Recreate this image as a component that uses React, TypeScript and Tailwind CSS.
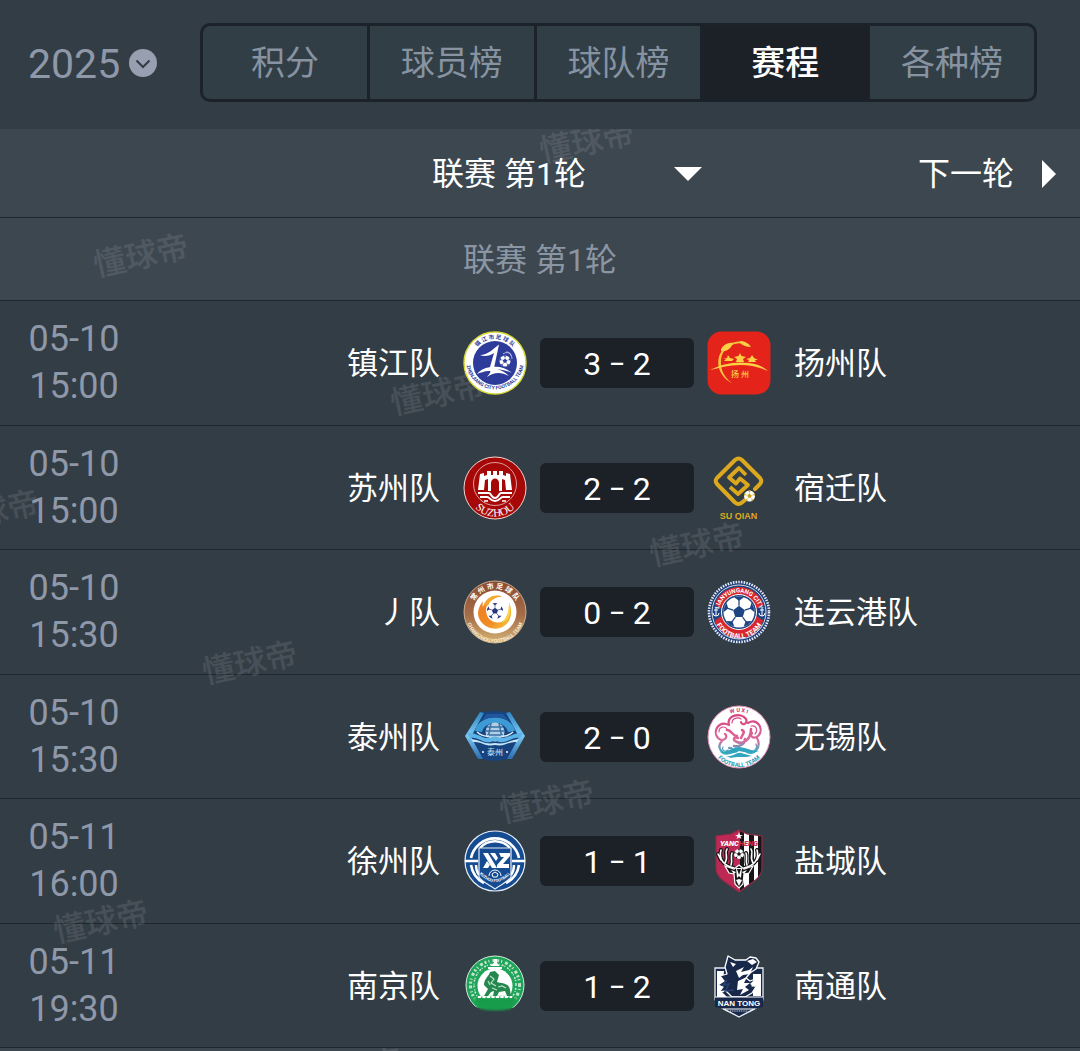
import { useId, useState } from "react";
import type { ReactNode } from "react";

const FONT = "font-['Roboto','Noto_Sans_CJK_SC',sans-serif]";

function Badge({ label, children }: { label: string; children: ReactNode }) {
  return (
    <svg viewBox="0 0 64 64" role="img" aria-label={label} className="relative z-10 size-16 shrink-0">
      {children}
    </svg>
  );
}

function ArcText({ d, size, fill, children, weight = 700, family = "Roboto, 'Noto Sans CJK SC', sans-serif" }: {
  d: string; size: number; fill: string; children: string; weight?: number; family?: string;
}) {
  const id = useId();
  return (
    <>
      <path id={id} d={d} fill="none" />
      <text fontSize={size} fill={fill} fontWeight={weight} fontFamily={family} textAnchor="middle">
        <textPath href={"#" + id} startOffset="50%">{children}</textPath>
      </text>
    </>
  );
}

function Football({ x, y, r, patch }: { x: number; y: number; r: number; patch: string }) {
  const angles = [0, 72, 144, 216, 288];
  return (
    <g transform={`translate(${x} ${y}) scale(${r / 10})`}>
      <circle r="10" fill="#fff" />
      <path d="M0-4 3.8-1.2 2.4 3.2H-2.4L-3.8-1.2Z" fill={patch} />
      {angles.map((a) => (
        <g key={a} transform={`rotate(${a})`}>
          <path d="M-3.2-9.5 0-7.3 3.2-9.5A10 10 0 0 0-3.2-9.5Z" fill={patch} />
          <path d="M0-4V-8" stroke={patch} strokeWidth="0.8" />
        </g>
      ))}
    </g>
  );
}

function Zhenjiang() {
  return (
    <Badge label="镇江队">
      <circle cx="32" cy="32" r="31" fill="#fff" stroke="#d6d935" strokeWidth="1.4" />
      <circle cx="32" cy="32" r="22" fill="#2d3c9b" />
      <ArcText d="M8 32A24 24 0 0 1 56 32" size={5.5} fill="#2d3c9b">镇 江 市 足 球 队</ArcText>
      <ArcText d="M3.5 24A29 29 0 1 0 60.5 24" size={5} fill="#2d3c9b">ZHENJIANG CITY FOOTBALL TEAM</ArcText>
      <path d="M17 24C25 24 30 18 36 13.500L31 37C35 38 41 40 46 45 38 41 31 41 24 46 27 42 29 40 26 40 21 40 17 42 14 43 18 38 23 37 27 36L31 22C27 25 21 26 17 24Z" fill="#fff" />
      <path d="M30 36C37 35 44 38 49 42 43 39 36 38 30 38Z" fill="#fff" />
      <Football x={42} y={30} r={5.5} patch="#2d3c9b" />
      <path d="M40 23C44 20 49 22 49 28M43 21C47 21 48 23 48 25" fill="none" stroke="#c8cfee" strokeWidth="0.8" />
    </Badge>
  );
}

function Yangzhou() {
  return (
    <Badge label="扬州队">
      <rect x="0.500" y="0.500" width="63" height="63" rx="14" fill="#e4231a" />
      <path d="M44 15C34 6 19 11 13 23 8 34 14 47 25 52 15 45 12 34 15 24 20 13 33 9 44 15Z" fill="#f8c23c" />
      <path d="M14 18C17 13 22 11 26 12 24 18 19 21 14 20ZM33 10C38 10 42 13 44 16 39 16 35 14 33 12Z" fill="#fbd044" />
      <path d="M3 39C14 33 29 30 42 32 51 33 57 36 61 40 52 36 43 34 34 34 22 34 12 37 3 39Z" fill="#fbd044" />
      <path d="M33 22 34.500 25 39 26 36 28 37 31H29L30 28 27 26 31.500 25ZM21 24 23 27 27 28 25 30H17L19 28 16 28 20 27ZM45 24 47 27 51 29H48L49 31H41L42 29 39 28 43 27Z" fill="#fbd044" />
      <text x="33" y="46" textAnchor="middle" fontSize="8" fontWeight="500" fill="#fbd044" fontFamily="'Noto Sans CJK SC', sans-serif">扬 州</text>
    </Badge>
  );
}

function Suzhou() {
  return (
    <Badge label="苏州队">
      <circle cx="32" cy="32" r="31" fill="#a60808" stroke="#f1d5d0" strokeWidth="1" />
      <circle cx="32" cy="28" r="21.500" fill="none" stroke="#edc3bd" strokeWidth="0.8" />
      <path d="M15 34 17 18 21 17V20L24 19V15H28V19H30V15H34V19H36V15H40V19L43 20V17L47 18 49 34H43L42 24 39 23V35H36V27C36 21 28 21 28 27V35H25V23L22 24 21 34Z" fill="#fff" />
      <path d="M15 37H26C28 37 28 42 32 42S36 37 38 37H49M17 41H24C27 41 27 45 32 45S37 41 40 41H47" fill="none" stroke="#fff" strokeWidth="2" />
      <path d="M21 45H25M39 45H43" stroke="#fff" strokeWidth="1.5" />
      <ArcText d="M8 46A27 27 0 0 0 56 46" size={11} weight={400} fill="#fff" family="'Liberation Serif', serif">SUZHOU</ArcText>
    </Badge>
  );
}

function Suqian() {
  return (
    <Badge label="宿迁队">
      <path d="M38 44 35 46.500Q31.500 49.500 28 46.500L10 28Q7.500 25 10 22L28 4Q31.500 1 35 4L53 22Q55.500 25 53 28L48 33" fill="none" stroke="#dca91e" strokeWidth="4" strokeLinecap="round" strokeLinejoin="round" />
      <path d="M39 19 32 12 22 21.500 29 27.500 33 22.500 41 29 31 38 23 31" fill="none" stroke="#dca91e" strokeWidth="3.800" strokeLinejoin="round" />
      <Football x={42.5} y={40} r={5.5} patch="#caa11c" />
      <text x="31.500" y="63" textAnchor="middle" fontSize="9" fontWeight="700" fill="#dca91e" fontFamily="'Liberation Sans', sans-serif">SU QIAN</text>
    </Badge>
  );
}

function Changzhou() {
  return (
    <Badge label="常州队">
      <defs>
        <linearGradient id="cz-ring" x2="0" y2="1">
          <stop stopColor="#8b4b31" /><stop offset="0.55" stopColor="#a66c47" /><stop offset="1" stopColor="#d3b274" />
        </linearGradient>
        <linearGradient id="cz-fire" x2="1" y2="1">
          <stop stopColor="#ef7c22" /><stop offset="0.6" stopColor="#f08c25" /><stop offset="1" stopColor="#f6cf45" />
        </linearGradient>
      </defs>
      <circle cx="32" cy="32" r="31" fill="url(#cz-ring)" stroke="#dcc3a5" strokeWidth="0.8" />
      <circle cx="32" cy="32" r="21.500" fill="#fff" />
      <ArcText d="M8.500 32A23.500 23.500 0 0 1 55.500 32" size={7} fill="#fff">常 州 市 足 球 队</ArcText>
      <ArcText d="M2.500 33A29.500 29.500 0 0 0 61.500 33" size={5} fill="#fbeed8">CHANGZHOU FOOTBALL TEAM</ArcText>
      <path d="M40 17C31 16 23 21 23 31 24 41 33 45 40 41 46 38 48 31 46 23 51 33 47 45 37 48 26 51 15 43 15 33 15 29 17 25 20 21 19 25 20 27 20 27 22 19 31 13 40 17Z" fill="url(#cz-fire)" />
      <path d="M21 25C24 17 31 14 38 16 32 18 27 20 25 26Z" fill="#f5a82c" />
      <path d="M46 23C50 32 46 41 38 43 43 39 46 32 46 23Z" fill="#f8d44c" />
      <Football x={32} y={31} r={8} patch="#29367d" />
    </Badge>
  );
}

function Lianyungang() {
  return (
    <Badge label="连云港队">
      <circle cx="32" cy="32" r="31" fill="#233f77" />
      <circle cx="32" cy="32" r="30" fill="none" stroke="#e9edf5" strokeWidth="2.600" strokeDasharray="1.500 1.200" />
      <circle cx="32" cy="32" r="27" fill="#1d4583" stroke="#fff" strokeWidth="0.8" />
      <path d="M9 24A24.500 24.500 0 0 1 55 24L49 28A18 18 0 0 0 15 28ZM9 41A24.500 24.500 0 0 0 55 41L49 37A18 18 0 0 1 15 37Z" fill="#d9272e" stroke="#d9272e" strokeWidth="2" />
      <circle cx="32" cy="32" r="17.500" fill="#1d4583" stroke="#fff" strokeWidth="1" />
      <Football x={32} y={32} r={15.5} patch="#1d4583" />
      <ArcText d="M11.500 33A20.500 20.500 0 0 1 52.500 33" size={6} fill="#fff">LIANYUNGANG CITY</ArcText>
      <ArcText d="M6.500 33A25.500 25.500 0 0 0 57.500 33" size={7} fill="#fff">FOOTBALL TEAM</ArcText>
      <path d="M9 28V36M7 30H11M6 33Q6 36 9 36T12 33M55 28V36M53 30H57M52 33Q52 36 55 36T58 33" fill="none" stroke="#fff" strokeWidth="1" />
    </Badge>
  );
}

function Taizhou() {
  return (
    <Badge label="泰州队">
      <defs>
        <linearGradient id="tz-sky" x2="0" y2="1">
          <stop stopColor="#2e86c5" /><stop offset="0.5" stopColor="#7cc8f1" /><stop offset="1" stopColor="#2b6cb4" />
        </linearGradient>
      </defs>
      <path d="M17 8Q32 4 47 8L62 31 49 52Q32 60 15 52L2 31Z" fill="#17437e" />
      <path d="M17 7 2 31 15 54H20L8 32 17 15 21 8ZM47 7 62 31 49 54H44L56 32 47 15 43 8Z" fill="url(#tz-sky)" />
      <path d="M12 26C15 8 49 8 52 26L45 27C42 15 22 15 19 27Z" fill="#3d9ad5" />
      <path d="M18 16 24 9H40L46 16C38 11 26 11 18 16Z" fill="#2257a0" />
      <circle cx="32" cy="27" r="9.500" fill="#b4cfe4" />
      <path d="M24 22H40M22 26H42M24 30H40M28 18 25 33M36 18 39 33" stroke="#3771a5" strokeWidth="1.500" />
      <path d="M4 28C14 27 19 34 27 33Q32 30 37 33C45 34 50 27 60 28L57 33C49 31 44 39 36 37Q32 34 28 37C20 39 15 31 7 33Z" fill="#5cb3e6" />
      <path d="M8 34C18 35 21 40 32 38 43 40 46 35 56 34L54 37C46 36 42 42 32 40 22 42 18 36 10 37Z" fill="#c3e6f8" />
      <path d="M14 27Q20 32 26 31M50 27Q44 32 38 31" fill="none" stroke="#dff2fc" strokeWidth="1.500" />
      <text x="32" y="50" textAnchor="middle" fontSize="8" fontWeight="500" fill="#b9dcf0" fontFamily="'Noto Sans CJK SC', sans-serif">泰州</text>
      <circle cx="20" cy="47" r="1" fill="#fff" /><circle cx="44" cy="47" r="1" fill="#fff" />
    </Badge>
  );
}

function Wuxi() {
  return (
    <Badge label="无锡队">
      <defs>
        <linearGradient id="wx-cloud" gradientUnits="userSpaceOnUse" x1="0" y1="8" x2="0" y2="54">
          <stop stopColor="#d7407c" /><stop offset="0.6" stopColor="#dd6a9c" /><stop offset="0.8" stopColor="#48abc2" /><stop offset="1" stopColor="#2ba6bd" />
        </linearGradient>
      </defs>
      <circle cx="32" cy="32" r="31" fill="#fff" stroke="#e292b4" strokeWidth="1" />
      <ArcText d="M7 32A25 25 0 0 1 57 32" size={5.5} fill="#cb3775">W U X I</ArcText>
      <ArcText d="M3 33A29 29 0 0 0 61 33" size={6} fill="#2b9bb5">FOOTBALL TEAM</ArcText>
      <g fill="none" stroke="url(#wx-cloud)" strokeLinecap="round">
        <path d="M22 20C19 10 34 7 39 14 41 19 35 21 34 17M41 18C50 13 57 23 52 30 48 35 42 32 45 28M50 33C55 42 47 51 40 47M15 36C9 42 15 51 23 48 27 46 25 42 22 43M22 20C12 15 5 26 11 33 16 38 22 32 18 29" strokeWidth="2.200" />
        <path d="M25 18C25 13 31 12 34 14M44 21C50 20 51 26 48 29M12 27C12 21 18 21 20 24M16 42C14 46 19 47 21 45M49 39C51 43 47 47 44 46" strokeWidth="1.200" />
        <path d="M20 25C25 25 25 31 30 31M44 24C44 34 37 40 30 37 25 35 27 31 31 33M35 25C39 27 35 30 34 33M38 34C38 39 33 42 27 41" strokeWidth="2.600" />
      </g>
      <path d="M13 47C22 47 26 42 32 42S43 46 52 46C43 49 37 47 32 46 28 49 20 50 13 47ZM19 51C27 52 29 47 34 48L45 51C37 53 29 51 24 53Z" fill="#32a5be" />
    </Badge>
  );
}

function Xuzhou() {
  return (
    <Badge label="徐州队">
      <circle cx="32" cy="32" r="30" fill="#154b91" stroke="#e5eef8" strokeWidth="1.200" />
      <g fill="none" stroke="#fff">
        <path d="M8 29A24.500 24.500 0 0 1 56 29M8 36A24.500 24.500 0 0 0 21 54M56 36A24.500 24.500 0 0 1 43 54" strokeWidth="2.600" />
        <path d="M17 19A20 20 0 0 1 47 19M13 36Q13 42 16 46M51 36Q51 42 48 46" strokeWidth="2.400" />
        <path d="M2 32H15M49 32H62" strokeWidth="2.400" />
      </g>
      <path d="M16 19H48V48C44 54 38 55 32 60 26 55 20 54 16 48Z" fill="#154b91" stroke="#e5eef8" strokeWidth="1.200" />
      <path d="M20 24H25L34 39H29ZM27 24H32L35 29 33 32ZM24 32 27 36 25 39H20ZM36 24H47V27L40 35H46V39H34V36L41 28H38Z" fill="#fff" />
      <path d="M26 47A6 6 0 0 1 38 47M29 45 32 43 35 45 34 48H30Z" fill="none" stroke="#fff" strokeWidth="1" />
      <ArcText d="M14 42Q32 64 50 42" size={4} fill="#fff">XUZHOU FOOTBALL</ArcText>
    </Badge>
  );
}

function Yancheng() {
  return (
    <Badge label="盐城队">
      <clipPath id="yc-shield"><path d="M32 1 40 5 55 7V39C55 50 43 54 32 63 21 54 9 50 9 39V7L24 5Z" /></clipPath>
      <g clipPath="url(#yc-shield)">
        <rect width="33" height="64" fill="#bd2854" />
        <rect x="33" width="31" height="64" fill="#171517" />
        <path d="M37 0H42V64H37ZM47 0H51V64H47Z" fill="#fff" />
      </g>
      <path d="M32 1 40 5 55 7V39C55 50 43 54 32 63 21 54 9 50 9 39V7L24 5Z" fill="none" stroke="#932947" strokeWidth="1.200" />
      <path d="M32 3 33 6H36L33.500 7.500 34.500 10 32 8.500 29.500 10 30.500 7.500 28 6H31Z" fill="#fff" />
      <text x="32" y="17" textAnchor="middle" fontSize="7.500" fontWeight="900" fontStyle="italic" fontFamily="Roboto, sans-serif"><tspan fill="#fff">YANC</tspan><tspan fill="#c62b55">HENG</tspan></text>
      <Football x={32} y={25} r={5} patch="#171517" />
      {["#171517", "#fff"].map((color, i) => (
        <path key={color} d="M27 39C18 37 11 31 14 21M18 34C22 28 17 24 20 20M24 36C26 31 23 28 25 24M14 31 11 25M37 39C46 37 53 31 50 21M46 34C42 28 47 24 44 20M40 36C38 31 41 28 39 24M50 31 53 25" fill="none" stroke={color} strokeWidth={i ? 1.6 : 4} strokeLinecap="round" />
      ))}
      <path d="M18 37 27 40 32 36 37 40 46 37 42 44 37 45 36 55 32 59 28 55 27 45 22 44Z" fill="#171517" stroke="#fff" strokeWidth="1.200" />
      <path d="M29 39H35L34 49 32 47 30 49ZM24 41 29 43 27 45ZM40 41 35 43 37 45ZM29 51 32 50 35 51 32 57Z" fill="#fff" />
      <path d="M30 40H34L32 46Z" fill="#171517" />
    </Badge>
  );
}

function Nanjing() {
  return (
    <Badge label="南京队">
      <defs>
        <clipPath id="nj-top"><path d="M0 0H64V45C58 49 55 53 49 54H17C10 53 8 49 4 46H0Z" /></clipPath>
        <filter id="nj-soft"><feGaussianBlur stdDeviation="0.8" /></filter>
      </defs>
      <g clipPath="url(#nj-top)">
        <circle cx="32" cy="31" r="29" fill="#20a45a" stroke="#d0ecdb" strokeWidth="1" />
        <circle cx="32" cy="31" r="24.500" fill="none" stroke="#bfe5cd" strokeWidth="3" strokeDasharray="2 2 1 3 3 2" />
        <circle cx="32" cy="31" r="21" fill="none" stroke="#c8ead5" strokeWidth="1.500" strokeDasharray="1 2 2 1" />
        <circle cx="32" cy="32" r="17.500" fill="#fff" />
      </g>
      <path d="M31 5H34V9L37 12H27L31 9ZM25 13H39V15H25Z" fill="#fff" />
      <path d="M21 42 25 35 21 31C21 25 26 22 27 18L32 17 36 21 34 28C41 30 46 29 47 36L48 42H44L42 37 36 38 34 42H30L31 37 28 38 25 42Z" fill="#24884e" />
      <path d="M27 22 31 25 28 29 33 32M35 33 39 32 43 34M25 27 27 31M29 34 34 36" fill="none" stroke="#b9e1c6" strokeWidth="1.200" />
      <path d="M9 44Q32 41 55 44L48 55Q32 58 17 55Z" fill="#169c4b" filter="url(#nj-soft)" />
      <path d="M15 43H49" stroke="#fff" strokeWidth="2" strokeDasharray="3 1.500" />
      <path d="M49 56V63" stroke="#69a27d" strokeWidth="1.500" filter="url(#nj-soft)" />
    </Badge>
  );
}

function Nantong() {
  return (
    <Badge label="南通队">
      <path d="M8 14H56V44C56 53 44 56 32 63 20 56 8 53 8 44Z" fill="#17284b" stroke="#e9eef4" strokeWidth="1.300" />
      <path d="M10 17H17L15 38 23 46H10ZM46 20H54V42H46Z" fill="#fff" />
      <path d="M21 2 28 6 39 6 43 3 49 4 52 8 49 15 43 19 39 24 43 27 48 25 45 32 50 31 45 39 38 43 25 43 19 37 12 38 16 33 11 31 17 27 13 22 20 20 18 13Z" fill="#17284b" stroke="#fff" strokeWidth="1.300" strokeLinejoin="round" />
      <path d="M23 8 29 10 26 13ZM40 7 46 5 50 8 45 11ZM29 17 37 13 34 18 42 16 46 13 43 20 36 21 32 24ZM31 27 40 23 37 29 43 29 38 33 42 36 33 41 36 35 30 36ZM43 30 49 24 53 25 48 33Z" fill="#fff" />
      <path d="M20 26 16 31 22 30 18 37 27 36" fill="none" stroke="#294070" strokeWidth="1.500" />
      <path d="M8 43H56V53L46 55H18L8 53Z" fill="#17284b" />
      <path d="M8 43H56M16 55H48" stroke="#fff" strokeWidth="1" />
      <text x="32" y="51.500" textAnchor="middle" fontSize="8" fontWeight="800" fill="#fff" fontFamily="'Liberation Sans', sans-serif">NAN TONG</text>
      <path d="M23 57H41" stroke="#dfe5ee" strokeWidth="1.200" strokeDasharray="1 0.800" />
    </Badge>
  );
}

type Match = { date: string; time: string; home: string; away: string; score: [number, number]; homeBadge: ReactNode; awayBadge: ReactNode };

const MATCHES: Match[] = [
  { date: "05-10", time: "15:00", home: "镇江队", away: "扬州队", score: [3, 2], homeBadge: <Zhenjiang />, awayBadge: <Yangzhou /> },
  { date: "05-10", time: "15:00", home: "苏州队", away: "宿迁队", score: [2, 2], homeBadge: <Suzhou />, awayBadge: <Suqian /> },
  { date: "05-10", time: "15:30", home: "丿队", away: "连云港队", score: [0, 2], homeBadge: <Changzhou />, awayBadge: <Lianyungang /> },
  { date: "05-10", time: "15:30", home: "泰州队", away: "无锡队", score: [2, 0], homeBadge: <Taizhou />, awayBadge: <Wuxi /> },
  { date: "05-11", time: "16:00", home: "徐州队", away: "盐城队", score: [1, 1], homeBadge: <Xuzhou />, awayBadge: <Yancheng /> },
  { date: "05-11", time: "19:30", home: "南京队", away: "南通队", score: [1, 2], homeBadge: <Nanjing />, awayBadge: <Nantong /> },
];

const TABS = ["积分", "球员榜", "球队榜", "赛程", "各种榜"];

const WATERMARKS = [
  "left-[93px] top-[111px]",
  "left-[539px] top-[-3px]",
  "left-[390px] top-[249px]",
  "left-[-56px] top-[367px]",
  "left-[649px] top-[400px]",
  "left-[202px] top-[518px]",
  "left-[499px] top-[657px]",
  "left-[53px] top-[777px]",
  "left-[308px] top-[925px]",
];

function MatchRow({ match }: { match: Match }) {
  return (
    <li className="flex h-[125px] items-center border-b border-[#1e272f] bg-[#333d45] even:h-[124px]">
      <div className="relative z-10 w-[154px] shrink-0 pl-7 text-4xl leading-[47px] text-[#8f98a8]">
        <time className="block w-[92px] text-center">
          {match.date}
          <br />
          {match.time}
        </time>
      </div>
      <div className="flex min-w-0 flex-1 items-center justify-end gap-[23px] pr-[13px]">
        <span className="relative z-10 pt-0.5 text-[31px] leading-10 whitespace-nowrap text-white">{match.home}</span>
        {match.homeBadge}
      </div>
      <div className="relative z-10 flex h-[50px] w-[154px] shrink-0 items-center justify-center gap-2 rounded-md bg-[#1c2027] pt-0.5 text-[32px] text-white">
        <span>{match.score[0]}</span>
        <span className="text-2xl font-medium">–</span>
        <span>{match.score[1]}</span>
      </div>
      <div className="flex min-w-0 flex-1 items-center gap-[23px] pl-[13px]">
        {match.awayBadge}
        <span className="relative z-10 pt-0.5 text-[31px] leading-10 whitespace-nowrap text-white">{match.away}</span>
      </div>
    </li>
  );
}

export default function App() {
  const [tab, setTab] = useState("赛程");
  return (
    <div className={`${FONT} flex min-h-screen flex-col bg-[#3d4750]`}>
      <header className="flex items-center bg-[#333d45] pt-[23px] pr-[43px] pb-[27px] pl-7">
        <div className="relative mr-[43px] w-[129px] shrink-0">
          <select aria-label="赛季" className="block w-full appearance-none bg-transparent p-0 pt-0.5 text-[41px] leading-[50px] text-[#8f98a8]">
            <option>2025</option>
          </select>
          <svg viewBox="0 0 28 28" className="pointer-events-none absolute top-3 right-0 size-7">
            <circle cx="14" cy="14" r="14" fill="#989fb1" />
            <path d="m7.500 11.500 6.500 6.500 6.500-6.500" fill="none" stroke="#333c45" strokeWidth="2" />
          </svg>
        </div>
        <nav className="flex h-[79px] min-w-0 flex-1 divide-x-3 divide-[#1c222a] overflow-hidden rounded-[10px] border-3 border-[#1c222a] bg-[#323e46]">
          {TABS.map((name) => (
            <button
              key={name}
              type="button"
              aria-pressed={name === tab}
              onClick={() => setTab(name)}
              className={name === tab ? "flex-1 bg-[#1c2027] pt-0.5 text-[34px] font-medium whitespace-nowrap text-white" : "flex-1 pt-0.5 text-[34px] whitespace-nowrap text-[#8793a1]"}
            >
              {name}
            </button>
          ))}
        </nav>
      </header>

      <main className="relative flex-1 overflow-hidden">
        <div className="grid h-[89px] grid-cols-[8fr_270px_7fr] items-center border-b border-[#1e272f] pt-0.5">
          <div className="relative z-10 col-start-2">
            <select aria-label="轮次" className="block w-full appearance-none bg-transparent p-0 text-[32px] leading-[46px] text-white">
              <option>联赛 第1轮</option>
            </select>
            <svg viewBox="0 0 28 14" className="pointer-events-none absolute top-4 right-0 h-3.5 w-7">
              <path d="M0 0H28L14 14Z" fill="#fff" />
            </svg>
          </div>
          <div className="relative z-10 flex justify-end pr-6">
            <button type="button" className="flex items-center gap-7 text-[32px] leading-[46px] whitespace-nowrap text-white">
              下一轮
              <svg viewBox="0 0 14 28" className="h-7 w-3.5">
                <path d="M0 0 14 14 0 28Z" fill="#fff" />
              </svg>
            </button>
          </div>
        </div>
        <h2 className="flex h-[83px] items-center justify-center border-b border-[#1e272f] pt-0.5 text-[32px] text-[#8b96a4]">联赛 第1轮</h2>
        <ul>
          {MATCHES.map((match) => (
            <MatchRow key={match.home} match={match} />
          ))}
        </ul>
        <div aria-hidden="true" className="pointer-events-none absolute inset-0 overflow-hidden text-[32px] leading-8 font-medium text-white/10">
          {WATERMARKS.map((place) => (
            <span key={place} className={`absolute -rotate-12 whitespace-nowrap ${place}`}>懂球帝</span>
          ))}
        </div>
      </main>
    </div>
  );
}
